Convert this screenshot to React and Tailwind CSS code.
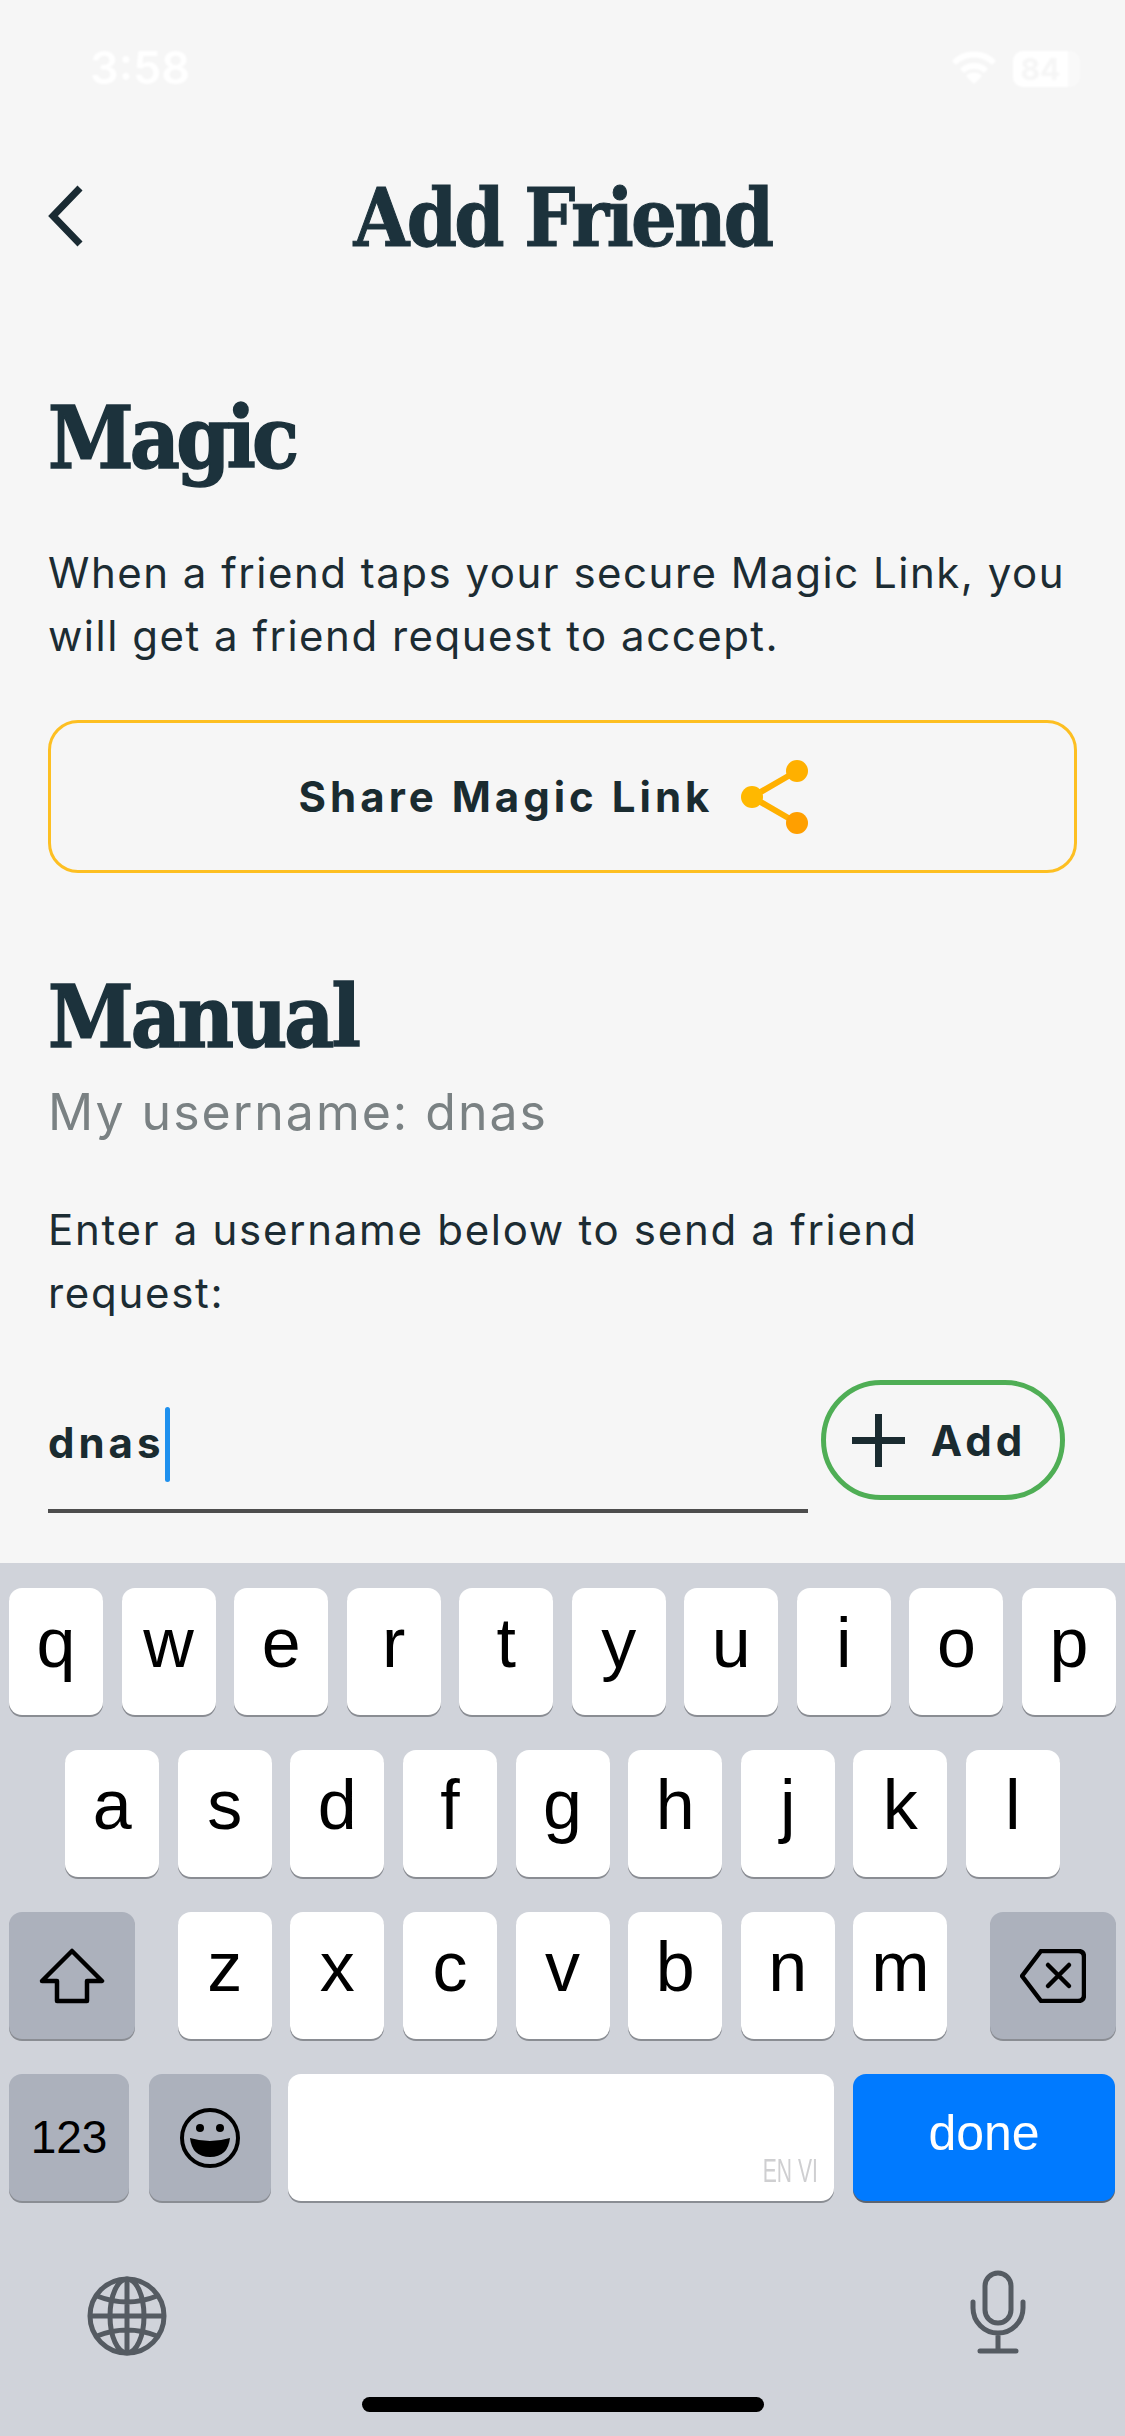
import React from "react";

const sans = "font-['Inter',sans-serif]";
const serif = "font-['DejaVu_Serif_Condensed','DejaVu_Serif',serif]";
const keyFont = "font-['Liberation_Sans',sans-serif]";

const Key = ({ label }) => (
    <div className={`w-[94px] h-[127px] bg-white rounded-[13px] shadow-[0_2px_0_#8a8d93] flex items-center justify-center text-[70px] text-black pb-4 ${keyFont}`}>
        {label}
    </div>
);

const DarkKey = ({ className, children }) => (
    <div className={`h-[127px] bg-[#acb1bc] rounded-[13px] shadow-[0_2px_0_#8a8d93] flex items-center justify-center ${className}`}>
        {children}
    </div>
);

const ShareIcon = () => (
    <svg width="67" height="74" viewBox="0 0 67 74" fill="none">
        <path d="M56 11 L11 37 L56 63" stroke="#ffb000" strokeWidth="6" />
        <circle cx="56" cy="11" r="11" fill="#ffb000" />
        <circle cx="11" cy="37" r="11" fill="#ffb800" />
        <circle cx="56" cy="63" r="11" fill="#ff9f00" />
    </svg>
);

const App = () => {
    return (
        <div className="w-[1125px] h-[2436px] bg-[#f6f6f6] flex flex-col overflow-hidden">
            <div className="h-[1563px] flex flex-col shrink-0">
                {/* status bar */}
                <div className="h-[173px] flex items-start justify-between pt-[44px] pl-[90px] pr-[45px] text-white font-['Inter',sans-serif] blur-[1px]">
                    <span className="text-[45px] leading-[48px] font-semibold">3:58</span>
                    <div className="flex items-start gap-[16px] pt-[7px]">
                        <svg width="46" height="34" viewBox="0 0 46 34" fill="none">
                            <path d="M3 12 A28 28 0 0 1 43 12" stroke="white" strokeWidth="6" />
                            <path d="M11 20 A17 17 0 0 1 35 20" stroke="white" strokeWidth="6" />
                            <path d="M23 33 L15 25 A11 11 0 0 1 31 25 Z" fill="white" />
                        </svg>
                        <div className="w-[67px] h-[36px] bg-white/40 rounded-[10px]">
                            <div className="w-[55px] h-[36px] bg-white rounded-l-[10px] text-[#f6f6f6] text-[30px] leading-[36px] font-bold text-center">84</div>
                        </div>
                    </div>
                </div>

                {/* header */}
                <div className="relative h-[90px] flex items-center justify-center">
                    <svg className="absolute left-[47px] top-[12px]" width="37" height="62" viewBox="0 0 37 62" fill="none">
                        <path d="M33 3 L6 31 L33 59" stroke="#1a2b33" strokeWidth="7" />
                    </svg>
                    <h1 className={`${serif} text-[80px] leading-[90px] font-bold tracking-[-2.7px] text-[#1c323c] [-webkit-text-stroke:1px_#1c323c]`}>Add Friend</h1>
                </div>

                <div className={`px-[48px] text-[#1c2c33] ${sans}`}>
                    <h2 className={`${serif} mt-[125px] text-[86px] leading-[100px] font-bold tracking-[-3.8px] text-[#1c323c] [-webkit-text-stroke:1.5px_#1c323c]`}>Magic</h2>
                    <p className="mt-[53px] text-[42px] leading-[63px] tracking-[1.5px]">
                        When a friend taps your secure Magic Link, you will get a friend request to accept.
                    </p>
                    <button className="mt-[53px] w-[1029px] h-[153px] border-[3px] border-[#fdbf22] rounded-[30px] flex items-center justify-center gap-[28px] pr-[18px]">
                        <span className="text-[42px] font-bold tracking-[4px] text-[#1a2b30]">Share Magic Link</span>
                        <ShareIcon />
                    </button>

                    <h2 className={`${serif} mt-[94px] text-[86px] leading-[100px] font-bold tracking-[-3px] text-[#1c323c] [-webkit-text-stroke:1.5px_#1c323c]`}>Manual</h2>
                    <p className="mt-[14px] text-[50px] leading-[62px] tracking-[2px] text-[#7a8183]">My username: dnas</p>
                    <p className="mt-[55px] text-[42px] leading-[63px] tracking-[1.7px]">
                        Enter a username below to send a friend<br />request:
                    </p>

                    <div className="mt-[56px] flex items-start gap-[13px]">
                        <div className="w-[760px] h-[133px] border-b-[4px] border-[#4d4d4d] flex items-center">
                            <span className="pb-1 text-[42px] font-bold tracking-[4px] text-[#1a2b30]">dnas</span>
                            <span className="w-[5px] h-[75px] rounded-full bg-[#1e90ee]"></span>
                        </div>
                        <button className="w-[244px] h-[120px] border-[5px] border-[#4fae55] rounded-[60px] flex items-center justify-center gap-[26px] pr-[8px] text-[#1a2b30]">
                            <svg width="53" height="53" viewBox="0 0 53 53" fill="none">
                                <path d="M26.5 0 V53 M0 26.5 H53" stroke="#1a2b30" strokeWidth="7" />
                            </svg>
                            <span className="text-[42px] font-bold tracking-[4px]">Add</span>
                        </button>
                    </div>
                </div>
            </div>

            {/* keyboard */}
            <div className="relative flex-1 bg-[#d0d3da] pt-[25px] px-[9px] flex flex-col gap-[35px]">
                <div className="flex justify-between">
                    {"qwertyuiop".split("").map((k) => <Key key={k} label={k} />)}
                </div>
                <div className="flex justify-center gap-[18.6px]">
                    {"asdfghjkl".split("").map((k) => <Key key={k} label={k} />)}
                </div>
                <div className="flex justify-between">
                    <DarkKey className="w-[126px]">
                        <svg width="66" height="56" viewBox="0 0 66 56" fill="none">
                            <path d="M33 3 L63 33 H48 V53 H18 V33 H3 Z" stroke="black" strokeWidth="4.5" strokeLinejoin="round" />
                        </svg>
                    </DarkKey>
                    <div className="flex gap-[18.6px]">
                        {"zxcvbnm".split("").map((k) => <Key key={k} label={k} />)}
                    </div>
                    <DarkKey className="w-[126px]">
                        <svg width="66" height="54" viewBox="0 0 66 54" fill="none">
                            <path d="M21 2 H58 Q64 2 64 8 V46 Q64 52 58 52 H21 L2 27 Z" stroke="black" strokeWidth="4.5" strokeLinejoin="round" />
                            <path d="M28 16 L49 37 M49 16 L28 37" stroke="black" strokeWidth="4.5" strokeLinecap="round" />
                        </svg>
                    </DarkKey>
                </div>
                <div className="flex">
                    <DarkKey className={`w-[120px] text-[46px] text-black ${keyFont}`}>123</DarkKey>
                    <DarkKey className="w-[122px] ml-[20px]">
                        <svg width="62" height="62" viewBox="0 0 62 62" fill="none">
                            <circle cx="31" cy="31" r="28" stroke="black" strokeWidth="4" />
                            <circle cx="21" cy="21" r="4" fill="black" />
                            <circle cx="41" cy="21" r="4" fill="black" />
                            <path d="M11 31 Q31 37 51 31 Q49 50 31 50 Q13 50 11 31 Z" fill="black" />
                        </svg>
                    </DarkKey>
                    <div className="ml-[17px] w-[546px] h-[127px] bg-white rounded-[13px] shadow-[0_2px_0_#8a8d93] flex items-end justify-end pr-[16px] pb-[12px]">
                        <span className={`text-[#cfcfd1] text-[34px] leading-[38px] scale-x-[0.62] origin-right whitespace-nowrap ${keyFont}`}>EN VI</span>
                    </div>
                    <div className={`ml-[19px] w-[262px] h-[127px] bg-[#007aff] rounded-[13px] shadow-[0_2px_0_#5d6470] flex items-center justify-center text-white text-[50px] pb-2 ${keyFont}`}>
                        done
                    </div>
                </div>

                {/* globe and mic */}
                <div className="flex justify-between items-start pl-[78px] pr-[90px] pt-[40px]">
                    <svg width="80" height="80" viewBox="0 0 80 80" fill="none" stroke="#555b62" strokeWidth="5">
                        <circle cx="40" cy="40" r="37" />
                        <ellipse cx="40" cy="40" rx="17" ry="37" />
                        <path d="M40 3 V77 M3 40 H77 M10 20 Q40 32 70 20 M10 60 Q40 48 70 60" />
                    </svg>
                    <svg className="-mt-[6px]" width="56" height="84" viewBox="0 0 56 84" fill="none" stroke="#555b62" strokeWidth="5" strokeLinecap="round">
                        <rect x="15" y="3" width="26" height="50" rx="13" />
                        <path d="M3 32 V38 A25 25 0 0 0 53 38 V32 M28 64 V81 M10 81 H46" />
                    </svg>
                </div>

                <div className="absolute left-[362px] bottom-[24px] w-[402px] h-[15px] rounded-full bg-black"></div>
            </div>
        </div>
    );
};

export default App;
